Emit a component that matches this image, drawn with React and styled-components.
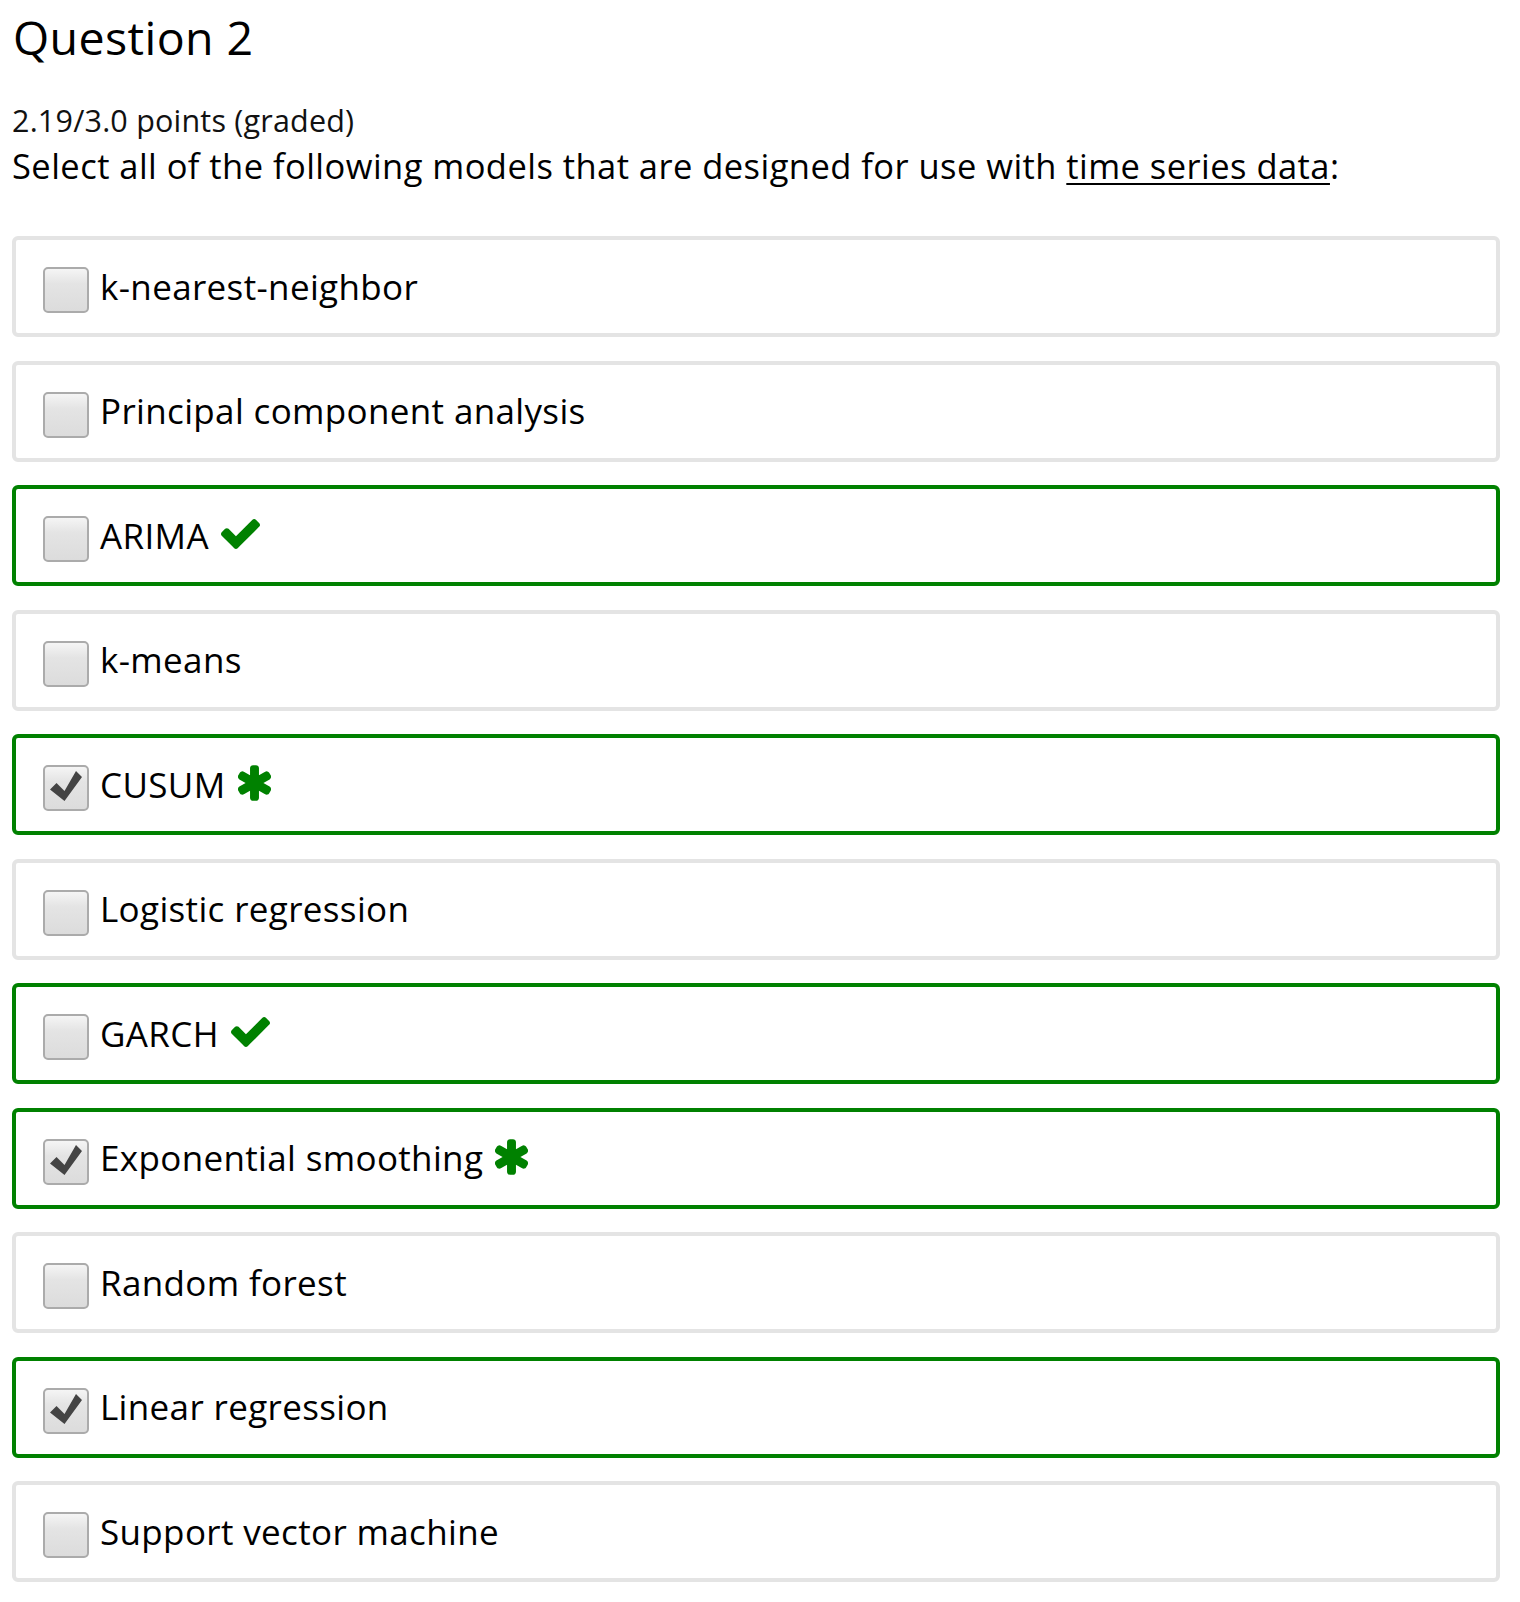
import React from 'react';
import styled, { createGlobalStyle } from 'styled-components';

const Global = createGlobalStyle`
  body {
    margin: 0;
    background: #fff;
    font-family: "Open Sans", "Noto Sans", sans-serif;
    color: #000;
  }
`;

const Page = styled.div`
  padding: 9px 20px 20px 12px;
`;

const Title = styled.h2`
  margin: 0;
  font-size: 46.5px;
  letter-spacing: 0.4px;
  line-height: 56px;
  font-weight: 400;
  padding-left: 1px;
`;

const Points = styled.div`
  margin-top: 35px;
  font-size: 30.5px;
  letter-spacing: 0.2px;
  line-height: 40px;
  color: #111;
`;

const Prompt = styled.p`
  margin: 3px 0 0;
  font-size: 34.5px;
  letter-spacing: 0.45px;
  line-height: 46px;

  u {
    text-decoration-thickness: 2px;
    text-underline-offset: 4px;
  }
`;

const Choices = styled.div`
  margin-top: 47px;
  display: flex;
  flex-direction: column;
  gap: 23.5px;
`;

const Choice = styled.label`
  box-sizing: border-box;
  height: 101px;
  display: flex;
  align-items: center;
  padding: 0 0 0 27px;
  border: 4px solid ${p => (p.$correct ? '#008100' : '#e4e4e4')};
  border-radius: 6px;
  background: #fff;
`;

const Box = styled.span`
  box-sizing: border-box;
  width: 46px;
  height: 46px;
  margin-top: 7px;
  margin-right: 11px;
  flex: none;
  display: flex;
  border: 2px solid #ababab;
  border-radius: 5px;
  background: linear-gradient(to bottom, #f5f5f5 0%, #e4e4e4 35%, #dcdcdc 100%);
  color: #444;
`;

const Label = styled.span`
  font-size: 35px;
  letter-spacing: 0.35px;
  line-height: 1.362;
  display: flex;
  align-items: center;
`;

const Mark = styled.svg`
  margin-left: ${p => p.$gap}px;
  margin-top: -3px;
  fill: #008100;
  flex: none;
`;

// FontAwesome 4 style glyph outlines
const CHECK =
  'M1671 566q0 40-28 68l-724 724-136 136q-28 28-68 28t-68-28l-136-136-362-362q-28-28-28-68t28-68l136-136q28-28 68-28t68 28l294 295 656-657q28-28 68-28t68 28l136 136q28 28 28 68z';
const ASTERISK =
  'M1546 1050q46 26 59.5 77.5t-12.5 97.5l-64 110q-26 46-77.5 59.5t-97.5-12.5l-266-153v307q0 52-38 90t-90 38h-128q-52 0-90-38t-38-90v-307l-266 153q-46 26-97.5 12.5t-77.5-59.5l-64-110q-26-46-12.5-97.5t59.5-77.5l266-154-266-154q-46-26-59.5-77.5t12.5-97.5l64-110q26-46 77.5-59.5t97.5 12.5l266 153v-307q0-52 38-90t90-38h128q52 0 90 38t38 90v307l266-153q46-26 97.5-12.5t77.5 59.5l64 110q26 46 12.5 97.5t-59.5 77.5l-266 154z';

const Tick = () => (
  <svg width="42" height="42" viewBox="2 2 42 42">
    <polygon points="7,24.5 13.5,18 21.5,26 33,6 39,12 21.5,36" fill="#444" />
  </svg>
);

const options = [
  { text: 'k-nearest-neighbor' },
  { text: 'Principal component analysis' },
  { text: 'ARIMA', correct: true, mark: 'check' },
  { text: 'k-means' },
  { text: 'CUSUM', correct: true, checked: true, mark: 'star' },
  { text: 'Logistic regression' },
  { text: 'GARCH', correct: true, mark: 'check' },
  { text: 'Exponential smoothing', correct: true, checked: true, mark: 'star' },
  { text: 'Random forest' },
  { text: 'Linear regression', correct: true, checked: true },
  { text: 'Support vector machine' },
];

export default function App() {
  return (
    <Page>
      <Global />
      <Title>Question 2</Title>
      <Points>2.19/3.0 points (graded)</Points>
      <Prompt>
        Select all of the following models that are designed for use with <u>time series data</u>:
      </Prompt>
      <Choices>
        {options.map(o => (
          <Choice key={o.text} $correct={o.correct}>
            <Box>{o.checked && <Tick />}</Box>
            <Label>
              {o.text}
              {o.mark === 'check' && (
                <Mark $gap={12} width="39" height="30" viewBox="121 334 1550 1188">
                  <path d={CHECK} />
                </Mark>
              )}
              {o.mark === 'star' && (
                <Mark $gap={12} width="33" height="36" viewBox="186 128 1420 1536">
                  <path d={ASTERISK} />
                </Mark>
              )}
            </Label>
          </Choice>
        ))}
      </Choices>
    </Page>
  );
}
